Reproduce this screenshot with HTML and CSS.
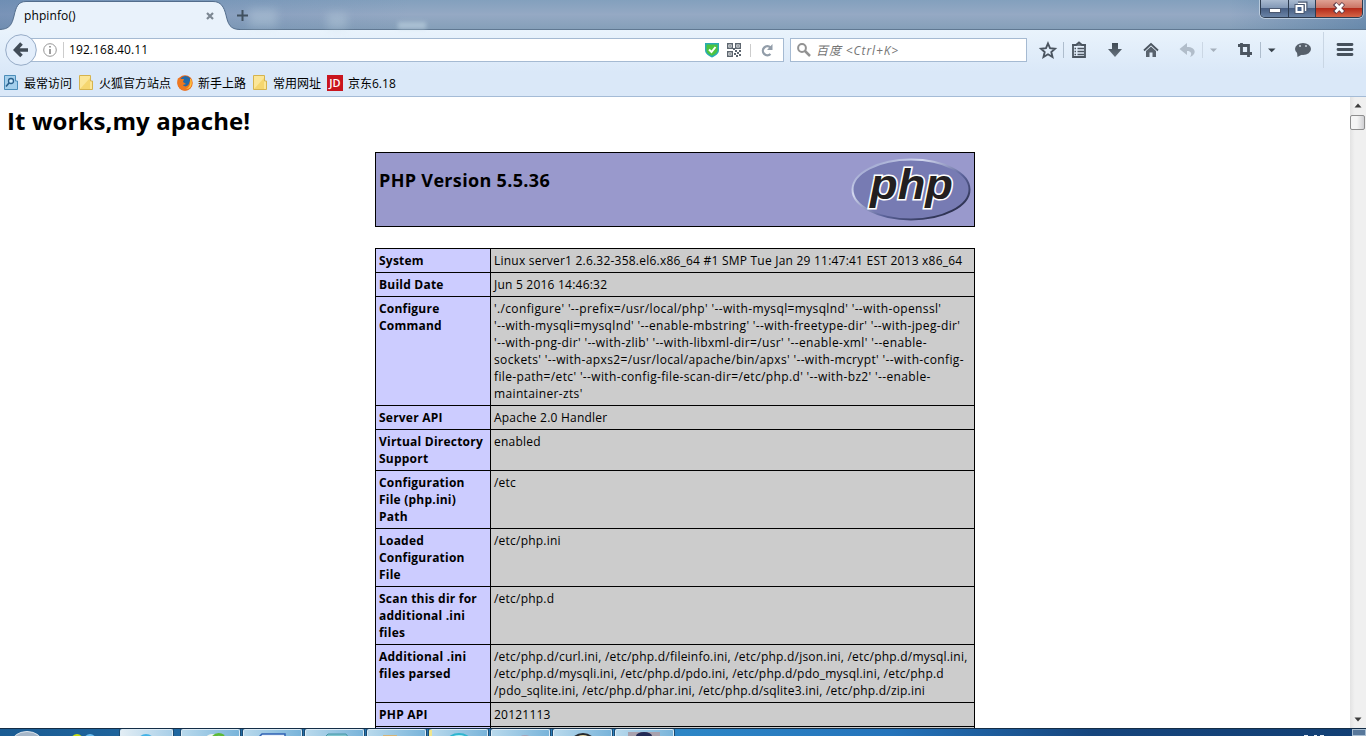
FILE: index.html
```html
<!DOCTYPE html>
<html lang="zh-CN">
<head>
    <meta charset="UTF-8">
    <title>phpinfo()</title>
    <link rel="stylesheet" href="styles.css">
</head>
<body>

    <div class="window">
        <!-- Tab strip -->
        <div class="tab-strip">
            <div class="tab">
                <svg class="tab-shape" width="240" height="31" viewBox="0 0 240 31">
                    <path d="M-1 29.500C10 29.500 12 24 14 16C16 7 18 1.500 26 1.500H213C221 1.500 224 7 226 15C228 24 230 29.500 240 29.500V31H-1Z" fill="#e9f2fb" stroke="#536d8c"/>
                    <rect y="30" width="240" height="1" fill="#e9f2fb"/>
                </svg>
                <span class="tab-title">phpinfo()</span>
                <svg class="tab-close" width="8" height="8" viewBox="0 0 8 8"><path d="M1 1L7 7M7 1L1 7" stroke="#7c8792" stroke-width="2.200"/></svg>
            </div>
            <svg class="new-tab" width="11" height="11" viewBox="0 0 11 11"><path d="M5.500 0V11M0 5.500H11" stroke="#40505f" stroke-width="2"/></svg>
            <div class="glass one"></div>
            <div class="glass two"></div>
            <div class="glass three"></div>
            <div class="window-buttons">
                <div class="win-btn"><svg width="27" height="17" viewBox="0 0 27 17"><rect x="8.500" y="8.500" width="11" height="4" fill="#fff" stroke="#4b5870"/></svg></div>
                <div class="win-btn"><svg width="26" height="17" viewBox="0 0 26 17"><path d="M9 3.500H16.500V11" fill="none" stroke="#4b5870" stroke-width="4"/><path d="M9 3.500H16.500V11" fill="none" stroke="#fff" stroke-width="1.500"/><rect x="7.500" y="6" width="6" height="6" fill="#46618a" stroke="#4b5870" stroke-width="4"/><rect x="7.500" y="6" width="6" height="6" fill="#46618a" stroke="#fff" stroke-width="2"/></svg></div>
                <div class="win-btn close"><svg width="46" height="17" viewBox="0 0 46 17"><path d="M18.500 3.500L27.500 12.500M27.500 3.500L18.500 12.500" stroke="#5b3947" stroke-width="4.500"/><path d="M19.500 4L27 12M27 4L19.500 12" stroke="#fff" stroke-width="2.800"/></svg></div>
            </div>
        </div>

        <!-- Navigation toolbar -->
        <div class="nav-bar">
            <div class="back">
                <svg width="32" height="32" viewBox="0 0 32 32"><circle cx="16" cy="16" r="15.300" fill="#e3eefb" stroke="#96abc6"/><path d="M16.500 9.500L10.500 16L16.500 22M11 16H23" fill="none" stroke="#414c58" stroke-width="3.600"/></svg>
            </div>
            <div class="url-bar">
                <svg class="info" width="14" height="14" viewBox="0 0 14 14"><circle cx="7" cy="7" r="6.300" fill="none" stroke="#969696"/><path d="M7 3V4.600M7 6V11" stroke="#858585" stroke-width="1.600"/></svg>
                <span class="url">192.168.40.11</span>
                <svg width="14" height="16" viewBox="0 0 14 16"><path d="M0 1H14V8C14 12 10 14 7 15.500C4 14 0 12 0 8Z" fill="#2aabb4"/><path d="M1.500 2.500H12.500V8C12.500 11 9.500 12.500 7 13.800C4 12.500 1.500 11 1.500 8Z" fill="#4cc43f"/><path d="M4 7.500L6.500 10L10.500 5" fill="none" stroke="#fff" stroke-width="2"/></svg>
                <svg class="qr" width="14" height="14" viewBox="0 0 14 14" fill="#5d666f"><path d="M0 0H6V6H0ZM1.400 1.400V4.600H4.600V1.400ZM8 0H14V6H8ZM9.400 1.400V4.600H12.600V1.400ZM0 8H6V14H0ZM1.400 9.400V12.600H4.600V9.400Z" fill-rule="evenodd"/><path d="M2.300 2.300h1.500v1.500h-1.500zM10.300 2.300h1.500v1.500h-1.500zM2.300 10.300h1.500v1.500h-1.500zM8 7h2v2h-2zM12 7h2v2h-2zM10 9h2v2h-2zM7 10h2v2h-2zM12 11h2v2h-2zM9 12h2v2h-2zM6 5h2v2h-2z"/></svg>
                <svg class="reload" width="13" height="13" viewBox="0 0 13 13"><path d="M9.500 10A4.500 4.500 0 1 1 9.500 3.500" fill="none" stroke="#929da9" stroke-width="2.300"/><path d="M11.500 0V6H6Z" fill="#929da9"/></svg>
            </div>
            <div class="search-bar">
                <svg width="14" height="14" viewBox="0 0 14 14"><circle cx="5" cy="5" r="3.900" fill="none" stroke="#929292" stroke-width="2"/><path d="M8 8L13 13" stroke="#929292" stroke-width="2.500"/></svg>
                <span class="search-hint">百度 &lt;Ctrl+K&gt;</span>
            </div>
            <svg class="toolbar-icons" width="339" height="42" viewBox="1027 30 339 42">
                <defs>
                    <linearGradient id="ink" x1="0" y1="0" x2="0" y2="1"><stop offset="0" stop-color="#404b55"/><stop offset="1" stop-color="#65717d"/></linearGradient>
                </defs>
                <path d="M1048 43.500L1050 48.200L1055 48.700L1051.300 52L1052.500 57L1048 54.300L1043.500 57L1044.700 52L1041 48.700L1046 48.200Z" fill="none" stroke="#4b5560" stroke-width="1.900"/>
                <path d="M1063.500 42V58M1260.500 42V58" stroke="#aebdcd"/>
                <path d="M1073 45H1076L1079 42.500L1082 45H1085V57H1073Z" fill="none" stroke="#4b5560" stroke-width="1.800"/>
                <path d="M1072 45H1086M1074.500 48.500H1076M1077.500 48.500H1084M1074.500 51.500H1076M1077.500 51.500H1084M1074.500 54.500H1076M1077.500 54.500H1084" stroke="#4b5560" stroke-width="1.400"/>
                <path d="M1112 43H1118V49H1122L1115 57L1108 49H1112Z" fill="url(#ink)"/>
                <path d="M1144 50.500L1151 44L1158 50.500" fill="none" stroke="#4b5560" stroke-width="1.800"/>
                <path d="M1151 46.500L1156 51V57H1152.500V52.500H1149.500V57H1146V51Z" fill="#59636e"/>
                <path d="M1179.500 49L1187 43V47C1197 47 1196.500 55 1190 57C1192.500 53.500 1191 51 1187 51V55Z" fill="#b1bdca"/>
                <path d="M1202.500 42V58" stroke="#cbd7e4"/>
                <path d="M1210 48.500H1217L1213.500 52Z" fill="#a5b0bc"/>
                <path d="M1238 45.500H1248.500V57M1241.500 43V53.500H1252" fill="none" stroke="#4b5560" stroke-width="2.800"/>
                <path d="M1268 48.500H1275.500L1271.700 52.200Z" fill="#38424c"/>
                <ellipse cx="1303" cy="49" rx="8" ry="6" fill="#56606b"/>
                <path d="M1297 52L1297.500 57L1303 54Z" fill="#56606b"/>
                <circle cx="1300" cy="46" r="1" fill="#cbd5df"/><circle cx="1306" cy="46" r="1" fill="#cbd5df"/>
                <path d="M1323.500 32V68" stroke="#c9d6e4"/>
                <path d="M1338 44.500H1352M1338 49.500H1352M1338 54.500H1352" stroke="#46515c" stroke-width="2.800" stroke-linecap="round"/>
            </svg>
        </div>

        <!-- Bookmarks -->
        <div class="bookmarks">
            <div class="bookmark b1">
                <svg width="16" height="16" viewBox="0 0 16 16"><path d="M1.500 .500H12.500V6H14.500V14.500H1.500Z" fill="#a4cfec" stroke="#4b8db9"/><circle cx="8" cy="6" r="2.500" fill="#d2edff" stroke="#285f8c" stroke-width="1.300"/><path d="M6 8L3 11.500" stroke="#285f8c" stroke-width="1.600"/></svg>
                <span>最常访问</span>
            </div>
            <div class="bookmark b2">
                <svg width="16" height="16" viewBox="0 0 16 16"><path d="M1.500 .500H12.500V6H14.500V14.500H1.500Z" fill="#fbe698" stroke="#d5b34e"/><path d="M2 14L12 3V14Z" fill="#f5d66f"/></svg>
                <span>火狐官方站点</span>
            </div>
            <div class="bookmark b3">
                <svg width="16" height="16" viewBox="0 0 16 16"><circle cx="8" cy="8" r="7.700" fill="#e8671b"/><circle cx="8.500" cy="6.500" r="5.500" fill="#236aa8"/><path d="M1 3L4 4L7 4L6 7L9 9L6 10C8 13 12 11 12.500 7L14 3C17 9 14 15 8 15.500C2 15.500-1 9 1 3Z" fill="#ee7820"/><path d="M13 4C14 8 13 12 9 14C14 14 16 9 14 4Z" fill="#ffc341"/></svg>
                <span>新手上路</span>
            </div>
            <div class="bookmark b4">
                <svg width="16" height="16" viewBox="0 0 16 16"><path d="M1.500 .500H12.500V6H14.500V14.500H1.500Z" fill="#fbe698" stroke="#d5b34e"/><path d="M2 14L12 3V14Z" fill="#f5d66f"/></svg>
                <span>常用网址</span>
            </div>
            <div class="bookmark b5">
                <b class="jd">JD</b>
                <span>京东6.18</span>
            </div>
        </div>

        <!-- Page -->
        <div class="viewport">
            <div class="page">
                <h1>It works,my apache!</h1>
                <div class="php-header">
                    <h2>PHP Version 5.5.36</h2>
                    <svg width="120" height="64" viewBox="0 0 120 64">
                        <defs>
                            <linearGradient id="rim" x1="0" y1="0" x2="1" y2="1"><stop offset="0" stop-color="#7f88bd"/><stop offset=".3" stop-color="#d4d9ef"/><stop offset=".6" stop-color="#5a629a"/><stop offset="1" stop-color="#16182a"/></linearGradient>
                        </defs>
                        <ellipse cx="60" cy="32.500" rx="58.500" ry="30" fill="#777bb3" stroke="url(#rim)" stroke-width="2"/>
                        <text class="php-word" x="19" y="42" textLength="83" lengthAdjust="spacingAndGlyphs">php</text>
                    </svg>
                </div>
                <table>
                    <tr><th>System</th><td>Linux server1 2.6.32-358.el6.x86_64 #1 SMP Tue Jan 29 11:47:41 EST 2013 x86_64</td></tr>
                    <tr><th>Build Date</th><td>Jun 5 2016 14:46:32</td></tr>
                    <tr><th>Configure<br>Command</th><td class="configure">'./configure' '--prefix=/usr/local/php' '--with-mysql=mysqlnd' '--with-openssl'<br>'--with-mysqli=mysqlnd' '--enable-mbstring' '--with-freetype-dir' '--with-jpeg-dir'<br>'--with-png-dir' '--with-zlib' '--with-libxml-dir=/usr' '--enable-xml' '--enable-<br>sockets' '--with-apxs2=/usr/local/apache/bin/apxs' '--with-mcrypt' '--with-config-<br>file-path=/etc' '--with-config-file-scan-dir=/etc/php.d' '--with-bz2' '--enable-<br>maintainer-zts'</td></tr>
                    <tr><th>Server API</th><td>Apache 2.0 Handler</td></tr>
                    <tr><th>Virtual Directory<br>Support</th><td>enabled</td></tr>
                    <tr><th>Configuration<br>File (php.ini)<br>Path</th><td>/etc</td></tr>
                    <tr><th>Loaded<br>Configuration<br>File</th><td>/etc/php.ini</td></tr>
                    <tr><th>Scan this dir for<br>additional .ini<br>files</th><td>/etc/php.d</td></tr>
                    <tr><th>Additional .ini<br>files parsed</th><td>/etc/php.d/curl.ini, /etc/php.d/fileinfo.ini, /etc/php.d/json.ini, /etc/php.d/mysql.ini,<br>/etc/php.d/mysqli.ini, /etc/php.d/pdo.ini, /etc/php.d/pdo_mysql.ini, /etc/php.d<br>/pdo_sqlite.ini, /etc/php.d/phar.ini, /etc/php.d/sqlite3.ini, /etc/php.d/zip.ini</td></tr>
                    <tr><th>PHP API</th><td>20121113</td></tr>
                    <tr><th>&nbsp;</th><td></td></tr>
                </table>
            </div>
            <div class="scrollbar">
                <svg class="arrow" width="8" height="5" viewBox="0 0 8 5"><path d="M0.500 4.500L4 0.500L7.500 4.500Z" fill="#3c3c3c"/></svg>
                <div class="thumb"></div>
                <svg class="arrow down" width="8" height="5" viewBox="0 0 8 5"><path d="M0.500 0.500H7.500L4 4.500Z" fill="#3c3c3c"/></svg>
            </div>
        </div>

        <!-- Taskbar -->
        <div class="taskbar">
            <div class="start">
                <svg width="117" height="8" viewBox="0 0 117 8"><ellipse cx="27" cy="15" rx="16" ry="12.500" fill="#a5b6c8" stroke="#dce6ee"/><circle cx="77" cy="11" r="6" fill="#c6dc13"/><circle cx="90" cy="11" r="6" fill="#69bdf0"/></svg>
            </div>
            <div class="task first"><svg width="53" height="8"><circle cx="25" cy="13" r="9" fill="#45b3e6"/></svg></div>
            <div class="task"><svg width="59" height="8"><ellipse cx="30" cy="10" rx="7" ry="6" fill="#eef5ef"/><path d="M30 8Q35 2 42 6" fill="none" stroke="#5dba35" stroke-width="2.500"/></svg></div>
            <div class="task"><svg width="59" height="8"><path d="M14 8L18 4H41V8Z" fill="#e8f1fa" stroke="#2f62b4" stroke-width="1.500"/></svg></div>
            <div class="task"><svg width="59" height="8"><path d="M18 8L22 4H40L43 8Z" fill="#7fc4cf" stroke="#4596a8"/></svg></div>
            <div class="task"><svg width="59" height="8"><rect x="15" y="5" width="14" height="3" fill="#d5b477"/></svg></div>
            <div class="task yellow"><svg width="59" height="8"><ellipse cx="27" cy="11" rx="11" ry="7" fill="#b9edf5" stroke="#2fb6d0" stroke-width="2"/></svg></div>
            <div class="task"><svg width="59" height="8"><ellipse cx="33" cy="8" rx="6" ry="3" fill="#a7a3b9"/></svg></div>
            <div class="task"><svg width="59" height="8"><ellipse cx="29" cy="13" rx="11" ry="9" fill="#e7d8a4" stroke="#272a2e" stroke-width="2"/></svg></div>
            <div class="task"><svg width="59" height="8"><rect x="12" y="2" width="32" height="6" fill="#a8a1ad"/><ellipse cx="28" cy="6" rx="8" ry="4" fill="#222a55"/></svg></div>
            <div class="tray"><svg width="24" height="8"><path d="M1 7H5M11 7H14M17 7H21" stroke="#e6eef7" stroke-width="2"/></svg></div>
            <div class="show-desktop"></div>
        </div>
    </div>

</body>
</html>
```
FILE: styles.css
```css
body {
    margin: 0;
    font-family: 'Open Sans', 'Noto Sans CJK SC', sans-serif;
    font-size: 12px;
    color: #000;
    overflow: hidden;
}

svg {
    display: block;
    flex: none;
}

.window {
    width: 1366px;
    height: 736px;
    display: flex;
    flex-direction: column;
    overflow: hidden;
    background: #fff;
}

/* Tab strip */
.tab-strip {
    position: relative;
    height: 30px;
    flex: none;
    display: flex;
    box-sizing: border-box;
    border-bottom: 1px solid #607892;
    background: linear-gradient(90deg, rgba(80, 115, 165, 0.4), rgba(80, 115, 165, 0) 30%, rgba(80, 115, 165, 0) 90%, rgba(60, 105, 150, 0.4)), linear-gradient(#83a0bd, #95a9c4 50%, #859fb9);
}

.tab {
    position: relative;
    z-index: 1;
    width: 237px;
    height: 31px;
    flex: none;
    display: flex;
    align-items: center;
}

.tab-shape {
    position: absolute;
    left: 0;
    top: 0;
}

.tab-title {
    position: relative;
    margin-left: 24px;
    width: 182px;
    letter-spacing: 0.1px;
}

.tab-close {
    position: relative;
}

.new-tab {
    position: relative;
    z-index: 1;
    margin-top: 10px;
}

.glass {
    position: absolute;
    background: #c3d7e4;
    filter: blur(4px);
    opacity: 0.35;
}

.one {
    left: 249px;
    top: 9px;
    width: 28px;
    height: 18px;
}

.two {
    left: 327px;
    top: 13px;
    width: 20px;
    height: 16px;
}

.three {
    left: 398px;
    top: 22px;
    width: 28px;
    height: 7px;
    filter: blur(2px);
    opacity: 0.6;
}

.window-buttons {
    margin-left: auto;
    margin-right: 3px;
    display: flex;
    height: 18px;
    box-sizing: border-box;
    border: 1px solid #2d3c50;
    border-top: 0;
    border-radius: 0 0 5px 5px;
    overflow: hidden;
    box-shadow: 0 0 0 1px rgba(220, 232, 242, 0.6);
}

.win-btn {
    background: linear-gradient(#a9bad0, #8399b7 45%, #485f83 50%, #6983a6);
    border-right: 1px solid #2d3c50;
}

.win-btn.close {
    border: 0;
    background: linear-gradient(#dfa193, #cb7666 45%, #b52b1a 50%, #d56547);
}

/* Toolbar */
.nav-bar {
    height: 42px;
    flex: none;
    display: flex;
    align-items: center;
    background: linear-gradient(#e9f3fc, #dae8f8);
}

.back {
    position: relative;
    z-index: 1;
    margin-left: 5px;
    margin-right: -8px;
    margin-top: -2px;
}

.url-bar {
    width: 755px;
    height: 24px;
    margin-top: -2px;
    box-sizing: border-box;
    border: 1px solid #a5bad2;
    background: #fff;
    display: flex;
    align-items: center;
}

.info {
    margin-left: 13px;
}

.url {
    margin-left: 6px;
    padding-left: 5px;
    width: 636px;
    line-height: 16px;
    letter-spacing: 0.08px;
    border-left: 1px solid #ccc;
    white-space: nowrap;
}

.qr {
    margin-left: 8px;
}

.reload {
    margin-left: 9px;
    padding-left: 10px;
    border-left: 1px solid #ccc;
}

.search-bar {
    width: 237px;
    height: 24px;
    margin: -2px 0 0 6px;
    padding-left: 6px;
    box-sizing: border-box;
    border: 1px solid #a5bad2;
    background: #fff;
    display: flex;
    align-items: center;
    gap: 5px;
}

.search-hint {
    font-style: italic;
    letter-spacing: 0.9px;
    color: #757575;
}

.bookmarks {
    height: 25px;
    flex: none;
    box-sizing: border-box;
    padding-left: 3px;
    border-bottom: 1px solid #a4bbd6;
    background: #dae8f8;
    display: flex;
    align-items: center;
    line-height: 17px;
}

.bookmark {
    display: flex;
    align-items: center;
    gap: 5px;
    height: 16px;
    margin-top: -2px;
    white-space: nowrap;
}

.b1, .b3, .b4 {
    width: 75px;
}

.b2 {
    width: 99px;
}

.jd {
    width: 16px;
    height: 16px;
    line-height: 16px;
    text-align: center;
    font-size: 11px;
    font-weight: 600;
    color: #fff;
    background: #c9151e;
}

/* Page content */
.viewport {
    height: 631px;
    flex: none;
    display: flex;
    overflow: hidden;
}

.page {
    width: 1350px;
    height: 631px;
    overflow: hidden;
}

h1 {
    margin: 6px 0 0 7px;
    font-size: 24px;
    line-height: 36px;
    letter-spacing: 0.1px;
    white-space: nowrap;
}

.php-header {
    width: 600px;
    height: 75px;
    margin: 13px auto 21px;
    box-sizing: border-box;
    border: 1px solid #000;
    padding: 4px 3px;
    background: #9999cc;
    display: flex;
    justify-content: space-between;
}

h2 {
    margin: 10px 0 0;
    font-size: 18px;
    line-height: 26px;
    letter-spacing: 0.33px;
    white-space: nowrap;
}

.php-word {
    font-family: 'Liberation Sans', sans-serif;
    font-size: 42px;
    font-weight: bold;
    font-style: italic;
    fill: #231f20;
    stroke: #fff;
    stroke-width: 3px;
    paint-order: stroke;
}

table {
    width: 600px;
    margin: 0 auto;
    table-layout: fixed;
    border-collapse: collapse;
}

th, td {
    padding: 3px;
    border: 1px solid #000;
    line-height: 17px;
    letter-spacing: 0.22px;
    text-align: left;
    vertical-align: top;
    white-space: nowrap;
}

th {
    width: 108px;
    background: #ccccff;
}

td {
    height: 17px;
    background: #cccccc;
}

.configure {
    letter-spacing: 0.36px;
}

.scrollbar {
    width: 15px;
    padding-right: 1px;
    background: linear-gradient(90deg, #e3e3e3, #f0f0f0 30%, #f0f0f0);
    display: flex;
    flex-direction: column;
    align-items: center;
}

.arrow {
    margin-top: 6px;
}

.thumb {
    width: 15px;
    height: 15px;
    margin-top: 7px;
    box-sizing: border-box;
    border: 1px solid #8e8e8e;
    border-radius: 2px;
    background: linear-gradient(90deg, #f5f5f5 45%, #d0d0d3);
}

.down {
    margin-top: auto;
    margin-bottom: 6px;
}

/* Taskbar */
.taskbar {
    height: 8px;
    flex: none;
    display: flex;
    gap: 3px;
    overflow: hidden;
    box-sizing: border-box;
    border-top: 1px solid #142d46;
    background: linear-gradient(90deg, #1b5c93, #2d86c6 50%, #2574bb 65%, #16457d 80%, #123f74);
}

.start {
    width: 117px;
}

.task {
    width: 57px;
    flex: none;
    border: 1px solid #dcebf5;
    border-bottom: 0;
    border-radius: 2px 2px 0 0;
    background: linear-gradient(90deg, #b8d9ec, #79b4da);
    box-shadow: 0 0 0 1px #1c4a70;
    overflow: hidden;
}

.task.first {
    width: 51px;
    margin-right: 5px;
    background: linear-gradient(90deg, #e2edf4, #a9cfe8);
}

.yellow {
    border-left: 3px solid #f1e68c;
    width: 55px;
}

.tray {
    margin-left: auto;
    margin-right: 22px;
}

.show-desktop {
    width: 12px;
    border: 1px solid #a9bfd3;
    background: #58789b;
}
```
